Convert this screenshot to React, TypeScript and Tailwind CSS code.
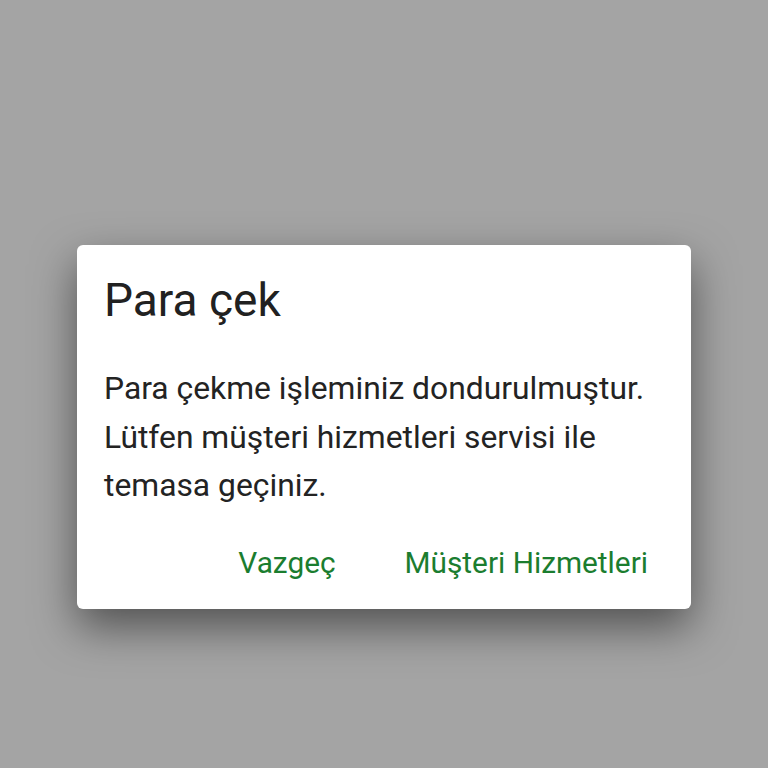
import React from "react";

const App: React.FC = () => {
  return (
    <div
      className="w-[768px] h-[768px] bg-[#a4a4a4] flex justify-center pt-[245px]"
      style={{ fontFamily: "Roboto, 'Noto Sans', sans-serif" }}
    >
      <div className="w-[614px] h-[364px] bg-white rounded-[6px] shadow-[0_18px_44px_rgba(0,0,0,0.5)] flex flex-col">
        <div className="pl-[27px] pt-[28px]">
          <h1 className="text-[46px] leading-[54px] text-[#212121]">Para çek</h1>
          <p className="mt-[37px] text-[31.8px] leading-[48.5px] text-[#232323]">
            Para çekme işleminiz dondurulmuştur.
            <br />
            Lütfen müşteri hizmetleri servisi ile
            <br />
            temasa geçiniz.
          </p>
        </div>
        <div className="flex justify-end items-center gap-[69px] pr-[43px] mt-[33px]">
          <button className="text-[29.8px] leading-[40px] text-[#1b7d2f]">Vazgeç</button>
          <button className="text-[29.8px] leading-[40px] text-[#1b7d2f]">Müşteri Hizmetleri</button>
        </div>
      </div>
    </div>
  );
};

export default App;
